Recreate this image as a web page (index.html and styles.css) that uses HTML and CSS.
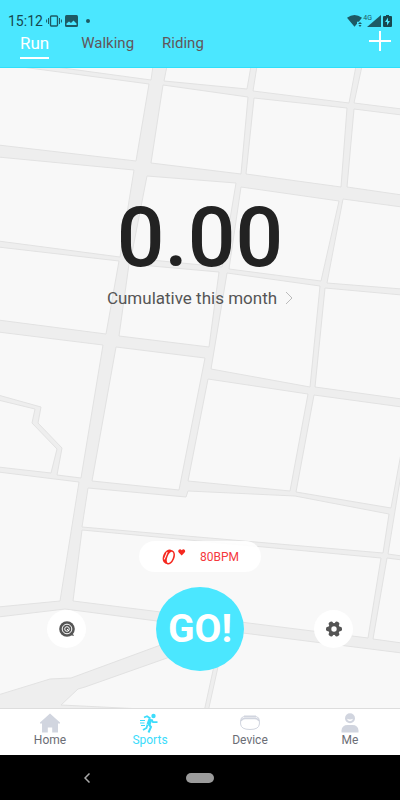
FILE: index.html
```
<!DOCTYPE html>
<html lang="en">

<head>
    <meta charset="utf-8">
    <meta name="viewport" content="width=device-width, initial-scale=1">
    <title>Sports</title>
    <link rel="stylesheet" href="styles.css">
</head>

<body>
    <header class="header">
        <div class="status-bar">
            <span class="time">15:12</span>
            <svg width="16" height="12" viewBox="0 0 16 12" fill="none" stroke="currentColor">
                <rect x="4.500" y="1" width="7" height="10" rx="1" stroke-width="1.400" />
                <path d="M2.500 3v6M.6 4.500v3M13.500 3v6M15.400 4.500v3" />
            </svg>
            <svg width="13" height="12" viewBox="0 0 13 12">
                <rect width="13" height="12" rx="1.500" fill="currentColor" />
                <path d="M1.500 10V8.500L4 6.500l2 1.500 2.500-2.500 3 3V10z" fill="#4be7ff" />
            </svg>
            <span class="dot"></span>
            <div class="status-right">
                <svg width="16" height="12" viewBox="0 0 16 12" fill="currentColor">
                    <path d="M0 2.800Q7.500-2.600 15 2.800L11.800 6.800H10v2L7.500 11.800z" />
                    <path d="M11 9l2-2 2 2zM11.500 10h3L13 12z" />
                </svg>
                <span class="network">4G</span>
                <svg width="14" height="12" viewBox="0 0 14 12" fill="currentColor">
                    <path d="M14 0v12H0z" />
                </svg>
                <svg width="9" height="12" viewBox="0 0 9 12">
                    <path d="M3 0h3v1h2q1 0 1 1v9q0 1-1 1H1q-1 0-1-1V2q0-1 1-1h2z" fill="#17474f" />
                    <path d="M5 2.500L2 7h2v3.500L7 6H5z" fill="#4be7ff" />
                </svg>
            </div>
        </div>
        <nav class="tabs">
            <a class="tab active" href="#run">Run</a>
            <a class="tab" href="#walking">Walking</a>
            <a class="tab" href="#riding">Riding</a>
            <button class="button-add" type="button" aria-label="Add">
                <svg width="22" height="20" viewBox="0 0 22 20" fill="none" stroke="#fff" stroke-width="2">
                    <path d="M11 0v20M0 10h22" />
                </svg>
            </button>
        </nav>
    </header>

    <main class="run">
        <!-- city blocks, the roads are the gaps between them -->
        <svg class="map" viewBox="0 68 400 640" preserveAspectRatio="xMidYMid slice" aria-hidden="true">
            <path d="M48 66H153L151 80z" />
            <path d="M-2 64L22 67 149 84 136 161 -2 145z" />
            <path d="M167 66H251L247 89 164 81z" />
            <path d="M257 66H356L349 103 253 91z" />
            <path d="M362 66H402V109L354 103z" />
            <path d="M163 85L248 97 241 174 151 163z" />
            <path d="M254 98L347 108 341 187 246 174z" />
            <path d="M354 109L402 115V195L347 187z" />
            <path d="M-2 157L134 170 120 257 -2 241z" />
            <path d="M147 176L236 183 222 267 131 258z" />
            <path d="M241 187L339 201 321 281 229 269z" />
            <path d="M343 199L402 207V289L327 283z" />
            <path d="M-2 247L119 261 106 334 -2 320z" />
            <path d="M129 264L219 272 209 347 119 336z" />
            <path d="M227 273L320 286 310 387 211 369z" />
            <path d="M325 288L402 295V399L315 387z" />
            <path d="M-2 332L103 345 81 478 57 475 62 448 38 423 41 407 -2 395z" />
            <path d="M-2 400L35 409 32 423 57 449 51 473 -2 467z" />
            <path d="M116 347L205 358 179 490 92 481z" />
            <path d="M208 379L308 394 290 491 188 481z" />
            <path d="M314 395L402 407V448L391 508 296 492z" />
            <path d="M88 488L186 497 188 491 295 496 389 514 383 553 82 527z" />
            <path d="M82 530L381 558 368 638 73 601z" />
            <path d="M402 468L388 554 402 556z" />
            <path d="M387 558L402 560V643L373 639z" />
            <path d="M-2 472L79 482 60 601 -2 607z" />
            <path d="M-2 617L65 609 157 621 200 627V630L158 646 71 678 50 679 -2 695z" />
            <path d="M78 689L85 687 167 658 220 638 204 712 61 705z" />
            <path d="M208 712L226 631 243 633 402 653V712z" />
        </svg>

        <div class="content">
            <div class="distance">0.00</div>
            <a class="summary" href="#month">
                Cumulative this month
                <svg width="8" height="14" viewBox="0 0 8 14" fill="none" stroke="#bbb">
                    <path d="M1 1l6 6-6 6" />
                </svg>
            </a>

            <div class="heart-rate">
                <svg width="25" height="18" viewBox="0 0 25 18">
                    <g transform="rotate(22 8 9)">
                        <ellipse cx="7" cy="9" rx="5" ry="7.500" fill="#f5281f" />
                        <ellipse cx="9" cy="9" rx="4.500" ry="7.500" fill="#f5281f" />
                        <ellipse cx="9.200" cy="9" rx="2.700" ry="6" fill="#fff" />
                        <path d="M4.500 5v8" stroke="#fff" />
                    </g>
                    <path d="M20.700 7.500L17.800 4.600Q16.600 3 17.600 1.900 19.300.500 20.700 2.300 22.300.500 23.800 1.900 24.800 3 23.600 4.600z" fill="#f5281f" />
                </svg>
                <span>80BPM</span>
            </div>

            <div class="button-container">
                <button class="button-round" type="button" aria-label="Goal">
                    <svg width="16" height="16" viewBox="0 0 16 16" fill="none" stroke="#fff">
                        <circle cx="8" cy="8" r="7.800" fill="#555" stroke="none" />
                        <path d="M11 14l3-1 1 2z" fill="#555" stroke="none" />
                        <circle cx="8" cy="8" r="4.800" />
                        <circle cx="8" cy="8" r="2.300" />
                        <path d="M8 8l2 2" />
                    </svg>
                </button>
                <button class="button-go" type="button">GO!</button>
                <button class="button-round" type="button" aria-label="Settings">
                    <svg width="16" height="16" viewBox="0 0 16 16">
                        <g fill="#555">
                            <circle cx="8" cy="8" r="6" />
                            <rect x="0" y="5.700" width="16" height="4.600" rx="1.800" />
                            <rect x="0" y="5.700" width="16" height="4.600" rx="1.800" transform="rotate(60 8 8)" />
                            <rect x="0" y="5.700" width="16" height="4.600" rx="1.800" transform="rotate(120 8 8)" />
                        </g>
                        <circle cx="8" cy="8" r="2.700" fill="#fff" />
                    </svg>
                </button>
            </div>
        </div>
    </main>

    <nav class="bottom-nav">
        <a class="nav-item" href="#home">
            <svg width="20" height="20" viewBox="0 0 20 20" fill="#d1d5df">
                <path d="M10 .5L20 9.500V10.500H18V19.500H12.200V14.500H7.800V19.500H2V10.500H0V9.500z" />
            </svg>
            Home
        </a>
        <a class="nav-item active" href="#sports">
            <svg width="20" height="20" viewBox="0 0 20 20" fill="none" stroke="#3cdcfb" stroke-width="2">
                <circle cx="13.500" cy="3" r="2.200" fill="#3cdcfb" stroke="none" />
                <path d="M4 4.500L7 3.200 10.500 5.500" stroke-width="1.800" />
                <path d="M10.500 6L8.500 11.500" stroke-width="4" />
                <path d="M8.500 11L11 14 8.500 19.500" />
                <path d="M7.500 11.500L6.500 15 3 17" stroke-width="1.800" />
                <path d="M11.500 6.500L13 9.200H17.500" stroke-width="1.800" />
                <path d="M0 7.500h5M0 10h4.500M1 12.500h4" stroke-width="1.200" />
            </svg>
            Sports
        </a>
        <a class="nav-item" href="#device">
            <svg width="20" height="20" viewBox="0 0 20 20" fill="none" stroke="#d1d5df">
                <path d="M4 2.500h12v2H4z" fill="#d1d5df" stroke="none" />
                <path d="M4 3.500Q.6 4 .6 8v3Q1 16.500 10 16.500T19.400 11V8Q19.400 4 16 3.500" />
                <path d="M1 8Q2 5.500 5 5.500H15Q18 5.500 19 8" stroke-width="1.600" />
            </svg>
            Device
        </a>
        <a class="nav-item" href="#me">
            <svg width="20" height="20" viewBox="0 0 20 20" fill="#d1d5df">
                <circle cx="10" cy="5.200" r="5" />
                <path d="M7 5.800Q10 7 13 5.800 12.500 8.200 10 8.200T7 5.800z" fill="#fff" />
                <path d="M1.500 19.500V17.500Q2 12 7.500 12H12.500Q18 12 18.500 17.500V19.500z" />
            </svg>
            Me
        </a>
    </nav>

    <div class="system-bar">
        <button class="system-back" type="button" aria-label="Back">
            <svg width="6" height="10" viewBox="0 0 6 10" fill="none" stroke="#aaa" stroke-width="1.500">
                <path d="M5.500.500L1 5l4.500 4.500" />
            </svg>
        </button>
        <button class="system-home" type="button" aria-label="Home screen"></button>
    </div>
</body>

</html>
```
FILE: styles.css
```
* {
    box-sizing: border-box;
}

body {
    margin: 0;
    min-height: 100vh;
    display: flex;
    flex-direction: column;
    font-family: Roboto, "Liberation Sans", sans-serif;
    background-color: #f8f8f8;
}

a {
    color: inherit;
    text-decoration: none;
}

button {
    border: none;
    padding: 0;
    background: none;
    font-family: inherit;
    cursor: pointer;
}

svg {
    display: block;
    flex: none;
}

.header {
    background-color: #4be7ff;
    border-bottom: 1px solid #2ee0fb;
    padding-top: 13px;
}

.status-bar {
    display: flex;
    align-items: center;
    height: 16px;
    padding: 0 8px;
    color: #1d5a64;
}

.time {
    font-size: 14px;
    margin-right: 3px;
    color: #17474f;
}

.status-bar > svg {
    margin-right: 3px;
}

.dot {
    width: 4px;
    height: 4px;
    margin-left: 5px;
    border-radius: 50%;
    background-color: currentColor;
}

.status-right {
    display: flex;
    margin-left: auto;
}

.network {
    margin-right: -5px;
    font-size: 7px;
    line-height: 6px;
}

.status-right svg:last-child {
    margin-left: 2px;
}

.tabs {
    display: flex;
    align-items: flex-start;
    height: 38px;
    padding: 2px 9px 0 20px;
}

.tab {
    margin-right: 28px;
    padding-bottom: 2px;
    font-size: 15px;
    line-height: 24px;
    color: #61565a;
}

.tab.active {
    margin-right: 32px;
    border-bottom: 2px solid #fff;
    font-size: 17px;
    color: #fff;
}

.button-add {
    margin-left: auto;
}

.run {
    flex: 1;
    display: grid;
}

/* map and content share the same cell */
.map,
.content {
    grid-area: 1 / 1;
    min-width: 0;
}

/* zero height so the map never stretches the row */
.map {
    width: 100%;
    height: 0;
    min-height: 100%;
    background-color: #eee;
    fill: #f8f8f8;
    stroke: #e2e2e2;
}

.content {
    z-index: 1;
    display: flex;
    flex-direction: column;
    align-items: center;
    padding: 120px 0 37px;
}

.distance {
    font-size: 84px;
    font-weight: 500;
    line-height: 100px;
    color: #222;
}

.summary {
    display: flex;
    align-items: center;
    gap: 8px;
    font-size: 17px;
    line-height: 20px;
    color: #555;
}

.heart-rate {
    display: flex;
    align-items: center;
    gap: 14px;
    height: 31px;
    margin-top: auto;
    padding: 0 22px;
    border-radius: 16px;
    background-color: rgba(255, 255, 255, 0.9);
    font-size: 12px;
    color: #f5383c;
}

.button-container {
    display: flex;
    align-items: center;
    justify-content: space-between;
    width: 100%;
    margin-top: 15px;
    padding: 0 47px;
}

.button-round {
    display: flex;
    align-items: center;
    justify-content: center;
    width: 39px;
    height: 38px;
    border-radius: 50%;
    background-color: #fff;
}

.button-go {
    width: 88px;
    height: 84px;
    border-radius: 50%;
    background-color: #4be7ff;
    font-size: 39px;
    font-weight: 700;
    color: #fff;
}

.bottom-nav {
    display: flex;
    height: 47px;
    border-top: 1px solid #ddd;
    background-color: #fff;
}

.nav-item {
    flex: 1;
    display: flex;
    flex-direction: column;
    align-items: center;
    padding-top: 4px;
    font-size: 12px;
    line-height: 14px;
    color: #6b6d75;
}

.nav-item.active {
    color: #3cdcfb;
}

.system-bar {
    display: grid;
    grid-template-columns: 1fr 28px 1fr;
    align-items: center;
    height: 45px;
    background-color: #000;
}

.system-back {
    justify-self: end;
    margin-right: 96px;
}

.system-home {
    height: 10px;
    border-radius: 5px;
    background-color: #9b9b9b;
}
```
